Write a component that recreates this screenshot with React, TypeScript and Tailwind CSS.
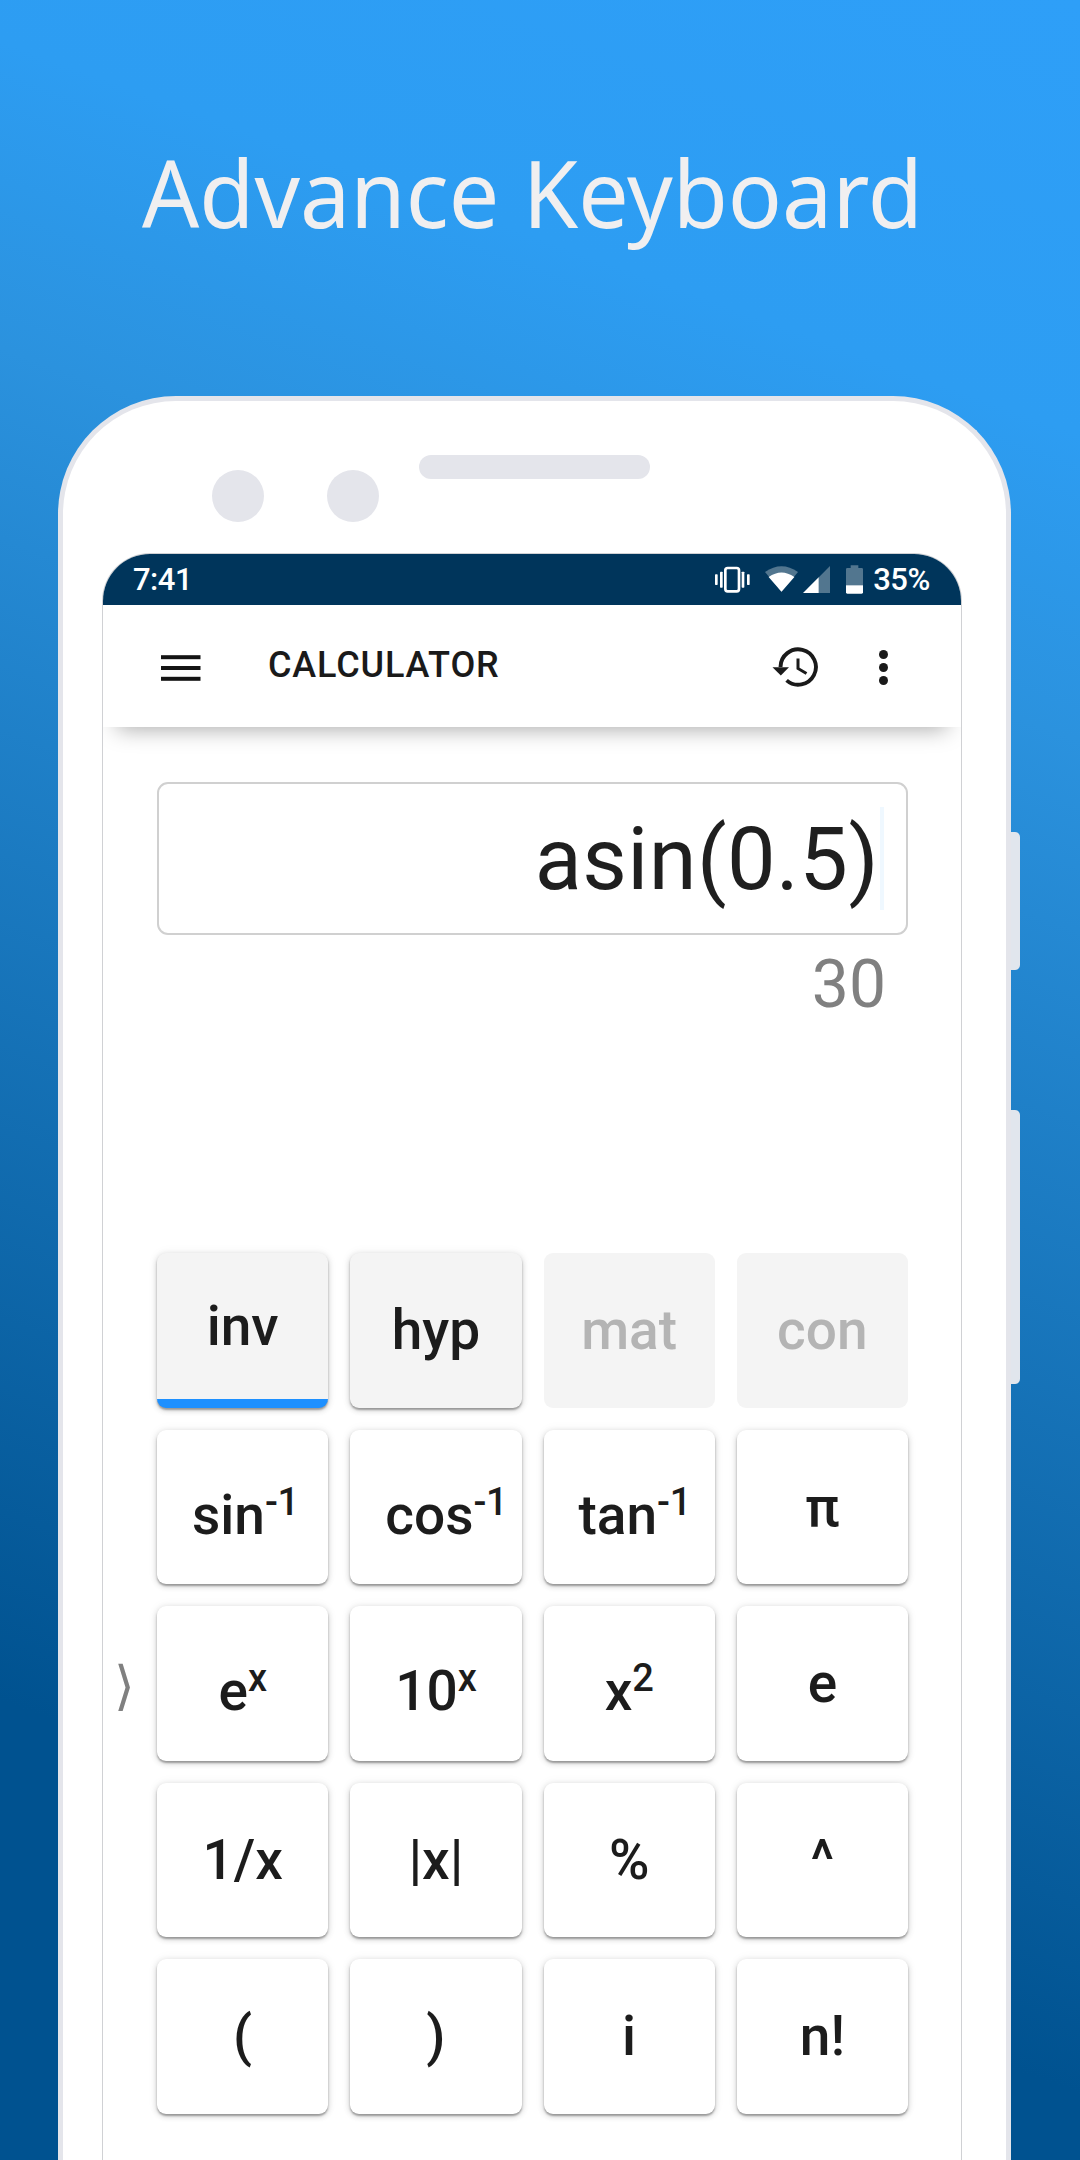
import type { ReactNode } from "react";

type Key = {
  label: string;
  sup?: string;
  start?: boolean;
  tone?: "mode" | "active" | "disabled";
};

const keys: Key[] = [
  { label: "inv", tone: "active" },
  { label: "hyp", tone: "mode" },
  { label: "mat", tone: "disabled" },
  { label: "con", tone: "disabled" },
  { label: "sin", sup: "-1", start: true },
  { label: "cos", sup: "-1", start: true },
  { label: "tan", sup: "-1", start: true },
  { label: "π" },
  { label: "e", sup: "x" },
  { label: "10", sup: "x" },
  { label: "x", sup: "2" },
  { label: "e" },
  { label: "1/x" },
  { label: "|x|" },
  { label: "%" },
  { label: "^" },
  { label: "(" },
  { label: ")" },
  { label: "i" },
  { label: "n!" },
];

const raised =
  "shadow-[0_2px_2px_rgba(0,0,0,0.3),0_2px_6px_rgba(0,0,0,0.18),0_0_12px_rgba(0,0,0,0.05)]";

function CalcKey({ label, sup, start, tone }: Key) {
  const surface =
    tone === "disabled"
      ? "bg-[#f4f4f4] text-[#b4b4b4]"
      : tone
        ? `bg-[#f4f4f4] text-[#1c1c1c] ${raised}`
        : `bg-white text-[#1c1c1c] ${raised}`;
  return (
    <button
      className={`flex h-[154.5px] min-w-0 items-center whitespace-nowrap rounded-[9px] text-[55px] font-medium leading-none ${surface} ${
        start ? "justify-start pl-[35px]" : "justify-center"
      } ${tone === "active" ? "border-b-[9px] border-[#1e90ff]" : ""} ${sup ? "pt-[17px]" : "pt-[1px]"}`}
    >
      <span>
        {label}
        {sup && (
          <span className="relative -top-[19px] text-[38px] leading-none tracking-[-0.3px]">{sup}</span>
        )}
      </span>
    </button>
  );
}

function StatusIcon({ width, box, children }: { width: string; box: string; children: ReactNode }) {
  return (
    <svg className={`h-[30px] shrink-0 ${width}`} viewBox={box} fill="white">
      {children}
    </svg>
  );
}

function StatusBar() {
  return (
    <div className="flex h-[51px] shrink-0 items-center rounded-t-[47px] bg-[#00355b] pl-[30px] pr-[31px] text-[31px] font-medium leading-none text-white">
      <span className="tracking-[-0.5px]">7:41</span>
      <StatusIcon width="ml-auto mb-[2px] w-[35px]" box="0 0 105 90">
        <rect x="31" y="12" width="41" height="70" rx="7" fill="none" stroke="white" strokeWidth="8" />
        <rect x="15" y="23" width="8" height="48" rx="2" />
        <rect x="0" y="31" width="8" height="32" rx="2" />
        <rect x="80" y="23" width="8" height="48" rx="2" />
        <rect x="96" y="31" width="8" height="32" rx="2" />
      </StatusIcon>
      <StatusIcon width="ml-[15px] mb-[2px] w-[33px]" box="0 0 100 90">
        <path d="M50 84 0 24Q50-12 100 24Z" fillOpacity=".32" />
        <path d="M50 84 11 39Q50 11 89 39Z" />
      </StatusIcon>
      <StatusIcon width="ml-[5px] mb-[2px] w-[27px]" box="0 0 81 90">
        <path d="M46 41 81 6V87H46Z" fillOpacity=".32" />
        <path d="M0 87 47 40V87Z" />
      </StatusIcon>
      <StatusIcon width="ml-[16px] mb-[2px] w-[17px]" box="0 0 51 90">
        <path d="M14 4h23v8h10q4 0 4 4v48H0V16q0-4 4-4h10Z" fillOpacity=".32" />
        <path d="M0 64h51v21q0 4-4 4H4q-4 0-4-4Z" />
      </StatusIcon>
      <span className="ml-[10px] tracking-[-0.4px]">35%</span>
    </div>
  );
}

function AppBar() {
  return (
    <header className="relative z-10 flex h-[122px] shrink-0 items-center bg-white pl-[58px] pr-[73px]">
      <svg className="mt-[3px] h-[26px] w-[40px]" viewBox="0 0 40 26" fill="#141414">
        <rect x="0" y="0.2" width="39.5" height="4" />
        <rect x="0" y="11" width="39.5" height="4" />
        <rect x="0" y="21.8" width="39.5" height="4" />
      </svg>
      <h2 className="ml-[67px] mt-[-2px] text-[36px] font-medium leading-none tracking-[0.85px] text-[#1a1a1a]">
        CALCULATOR
      </h2>
      <svg className="ml-auto mt-[2px] h-[44px] w-[50px]" viewBox="0 0 50 44" fill="none" stroke="#1a1a1a">
        <path d="M10.5 22a17.7 17.7 0 1 1 6.1 13.4" strokeWidth="3.9" />
        <path d="M28 13.5V23.5L36.5 28.5" strokeWidth="3" />
        <path d="M2.5 22.3H19L10.8 30.6Z" fill="#1a1a1a" stroke="none" />
      </svg>
      <div className="ml-[59px] flex flex-col gap-[4.2px] pt-[3px]">
        <div className="size-[9px] rounded-full bg-[#1a1a1a]" />
        <div className="size-[9px] rounded-full bg-[#1a1a1a]" />
        <div className="size-[9px] rounded-full bg-[#1a1a1a]" />
      </div>
      <div className="absolute inset-x-0 top-full h-[30px] overflow-hidden">
        <div className="mx-[14px] -mt-[30px] h-[30px] shadow-[0_2px_22px_rgba(0,0,0,0.34)]" />
      </div>
    </header>
  );
}

export default function App() {
  return (
    <div className="flex h-[2160px] w-[1080px] flex-col overflow-hidden bg-[linear-gradient(200deg,#2e9ff8_0%,#2d9df2_17%,#2b92de_29%,#005290_82%)] font-['Roboto',sans-serif]">
      <h1 className="h-[396px] w-[900px] shrink-0 origin-left scale-x-[0.954] whitespace-nowrap ml-[142px] pt-[128px] font-['Noto_Sans',sans-serif] text-[94px] font-normal leading-[128px] text-[#f0eff0]">
        Advance Keyboard
      </h1>
      <div className="ml-[58px] flex h-[1764px] items-start">
        <div className="flex h-[1764px] w-[953px] flex-col rounded-t-[118px] border-x-[5px] border-t-[5px] border-[#e4e5eb] bg-white">
          <div className="flex h-[152px] shrink-0 items-start">
            <div className="ml-[149px] mt-[69px] size-[52px] rounded-full bg-[#e4e5eb]" />
            <div className="ml-[63px] mt-[69px] size-[52px] rounded-full bg-[#e4e5eb]" />
            <div className="ml-[40px] mt-[54px] h-[24px] w-[231px] rounded-full bg-[#e4e5eb]" />
          </div>
          <main className="ml-[39px] flex h-[1607px] w-[860px] flex-col rounded-t-[48px] border-x border-t border-[#d0d1d4] bg-white">
            <StatusBar />
            <AppBar />
            <section className="ml-[54px] mt-[55px] w-[751px]">
              <div className="flex h-[153px] items-center justify-end rounded-[11px] border-2 border-[#d0d0d0] pr-[22px] text-[86.5px] leading-none text-[#1f1f1f]">
                <span className="pt-[3px] tracking-[0.45px]">asin(0.5)</span>
                <span className="ml-[1px] h-[103px] w-[4px] bg-[#eff8ff]" />
              </div>
              <div className="mt-[16px] pr-[22px] text-right text-[66px] leading-[68px] text-[#808080]">30</div>
            </section>
            <section className="mt-[234px] flex items-start">
              <div className="mt-[403px] flex w-[54px] shrink-0 justify-start pl-[11px] font-['DejaVu_Sans',sans-serif] text-[53px] leading-[60px] text-[#808080]">
                ⟩
              </div>
              <div className="grid w-[751px] shrink-0 grid-cols-4 gap-x-[22px] gap-y-[22px]">
                {keys.map((key, i) => (
                  <CalcKey key={i} {...key} />
                ))}
              </div>
            </section>
          </main>
        </div>
        <div className="flex flex-col gap-[140px] pt-[436px]">
          <div className="h-[138px] w-[9px] rounded-r-[5px] bg-[#e1e6ed]" />
          <div className="h-[274px] w-[9px] rounded-r-[5px] bg-[#e1e6ed]" />
        </div>
      </div>
    </div>
  );
}
